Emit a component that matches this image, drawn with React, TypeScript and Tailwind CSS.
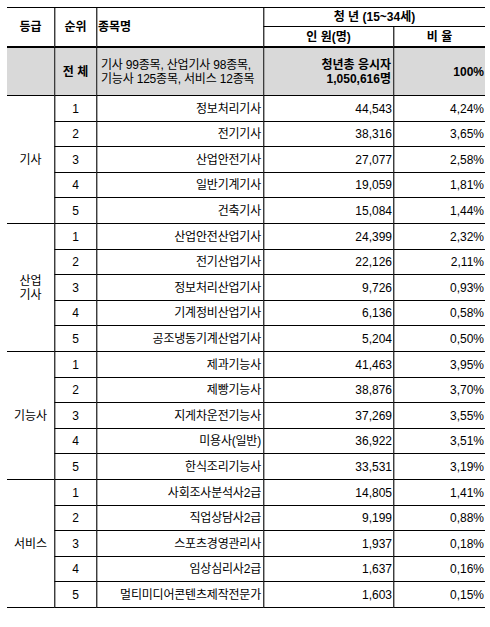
const groups = [
  {
    grade: ["기사"],
    rows: [
      ["정보처리기사", "44,543", "4,24%"],
      ["전기기사", "38,316", "3,65%"],
      ["산업안전기사", "27,077", "2,58%"],
      ["일반기계기사", "19,059", "1,81%"],
      ["건축기사", "15,084", "1,44%"],
    ],
  },
  {
    grade: ["산업", "기사"],
    rows: [
      ["산업안전산업기사", "24,399", "2,32%"],
      ["전기산업기사", "22,126", "2,11%"],
      ["정보처리산업기사", "9,726", "0,93%"],
      ["기계정비산업기사", "6,136", "0,58%"],
      ["공조냉동기계산업기사", "5,204", "0,50%"],
    ],
  },
  {
    grade: ["기능사"],
    rows: [
      ["제과기능사", "41,463", "3,95%"],
      ["제빵기능사", "38,876", "3,70%"],
      ["지게차운전기능사", "37,269", "3,55%"],
      ["미용사(일반)", "36,922", "3,51%"],
      ["한식조리기능사", "33,531", "3,19%"],
    ],
  },
  {
    grade: ["서비스"],
    rows: [
      ["사회조사분석사2급", "14,805", "1,41%"],
      ["직업상담사2급", "9,199", "0,88%"],
      ["스포츠경영관리사", "1,937", "0,18%"],
      ["임상심리사2급", "1,637", "0,16%"],
      ["멀티미디어콘텐츠제작전문가", "1,603", "0,15%"],
    ],
  },
];

// vertical divider: dark line with a lighter shade beside it
const vline = "border-l border-l-[#3c3c3c] shadow-[inset_1px_0_0_#a8a8a8]";

export default function App() {
  return (
    <div className="w-[490px] h-[627px] bg-white font-['Liberation_Sans','Noto_Sans_CJK_KR',sans-serif] text-[12px] text-black">
      <div className="ml-[7px] mt-[7px] w-[478px] border-t border-t-black grid grid-cols-[47px_42px_167px_130px_92px] grid-rows-[19px_21px_48px_repeat(4,26px_25px_26px_25px_26px)]">
        {/* header */}
        <div className="row-span-2 flex items-center justify-center font-bold border-b-2 border-b-black pb-[1px]">
          등급
        </div>
        <div className={`row-span-2 flex items-center justify-center font-bold border-b-2 border-b-black pb-[1px] ${vline}`}>
          순위
        </div>
        <div className={`row-span-2 flex items-center pl-[1px] font-bold border-b-2 border-b-black pb-[1px] ${vline}`}>
          종목명
        </div>
        <div className={`col-span-2 flex items-center justify-center font-bold border-b border-b-black leading-none ${vline}`}>
          청 년 (15~34세)
        </div>
        <div className={`flex items-center justify-center font-bold border-b-2 border-b-black leading-none ${vline}`}>
          인 원(명)
        </div>
        <div className={`flex items-center justify-center font-bold border-b-2 border-b-black leading-none ${vline}`}>
          비 율
        </div>

        {/* total row */}
        <div className="bg-[#d9d9d9] border-b border-b-black" />
        <div className={`bg-[#d9d9d9] border-b border-b-black flex items-center justify-center font-bold ${vline}`}>
          전 체
        </div>
        <div className={`bg-[#d9d9d9] border-b border-b-black flex flex-col justify-center pl-[4px] leading-[14px] tracking-[-0.2px] whitespace-nowrap ${vline}`}>
          <span>기사 99종목, 산업기사 98종목,</span>
          <span>기능사 125종목, 서비스 12종목</span>
        </div>
        <div className={`bg-[#d9d9d9] border-b border-b-black flex flex-col justify-center items-end pr-[2px] font-bold leading-[14px] whitespace-nowrap ${vline}`}>
          <span>청년총 응시자</span>
          <span>1,050,616명</span>
        </div>
        <div className={`bg-[#d9d9d9] border-b border-b-black flex items-center justify-end pr-[1px] font-bold ${vline}`}>
          100%
        </div>

        {/* data rows */}
        {groups.map((g) =>
          [
            <div
              key={`${g.grade.join("")}-grade`}
              className="row-span-5 flex flex-col items-center justify-center border-b border-b-black leading-[14px]"
            >
              {g.grade.map((t) => (
                <span key={t}>{t}</span>
              ))}
            </div>,
            ...g.rows.flatMap((r, i) => [
              <div
                key={`${r[0]}-rank`}
                className={`flex items-center justify-center border-b border-b-black ${vline}`}
              >
                {i + 1}
              </div>,
              <div
                key={`${r[0]}-name`}
                className={`flex items-center justify-end pr-[2px] whitespace-nowrap tracking-[-0.2px] border-b border-b-black ${vline}`}
              >
                {r[0]}
              </div>,
              <div
                key={`${r[0]}-count`}
                className={`flex items-center justify-end pr-[1px] border-b border-b-black ${vline}`}
              >
                {r[1]}
              </div>,
              <div
                key={`${r[0]}-ratio`}
                className={`flex items-center justify-end pr-[1px] border-b border-b-black ${vline}`}
              >
                {r[2]}
              </div>,
            ]),
          ]
        )}
      </div>
    </div>
  );
}
